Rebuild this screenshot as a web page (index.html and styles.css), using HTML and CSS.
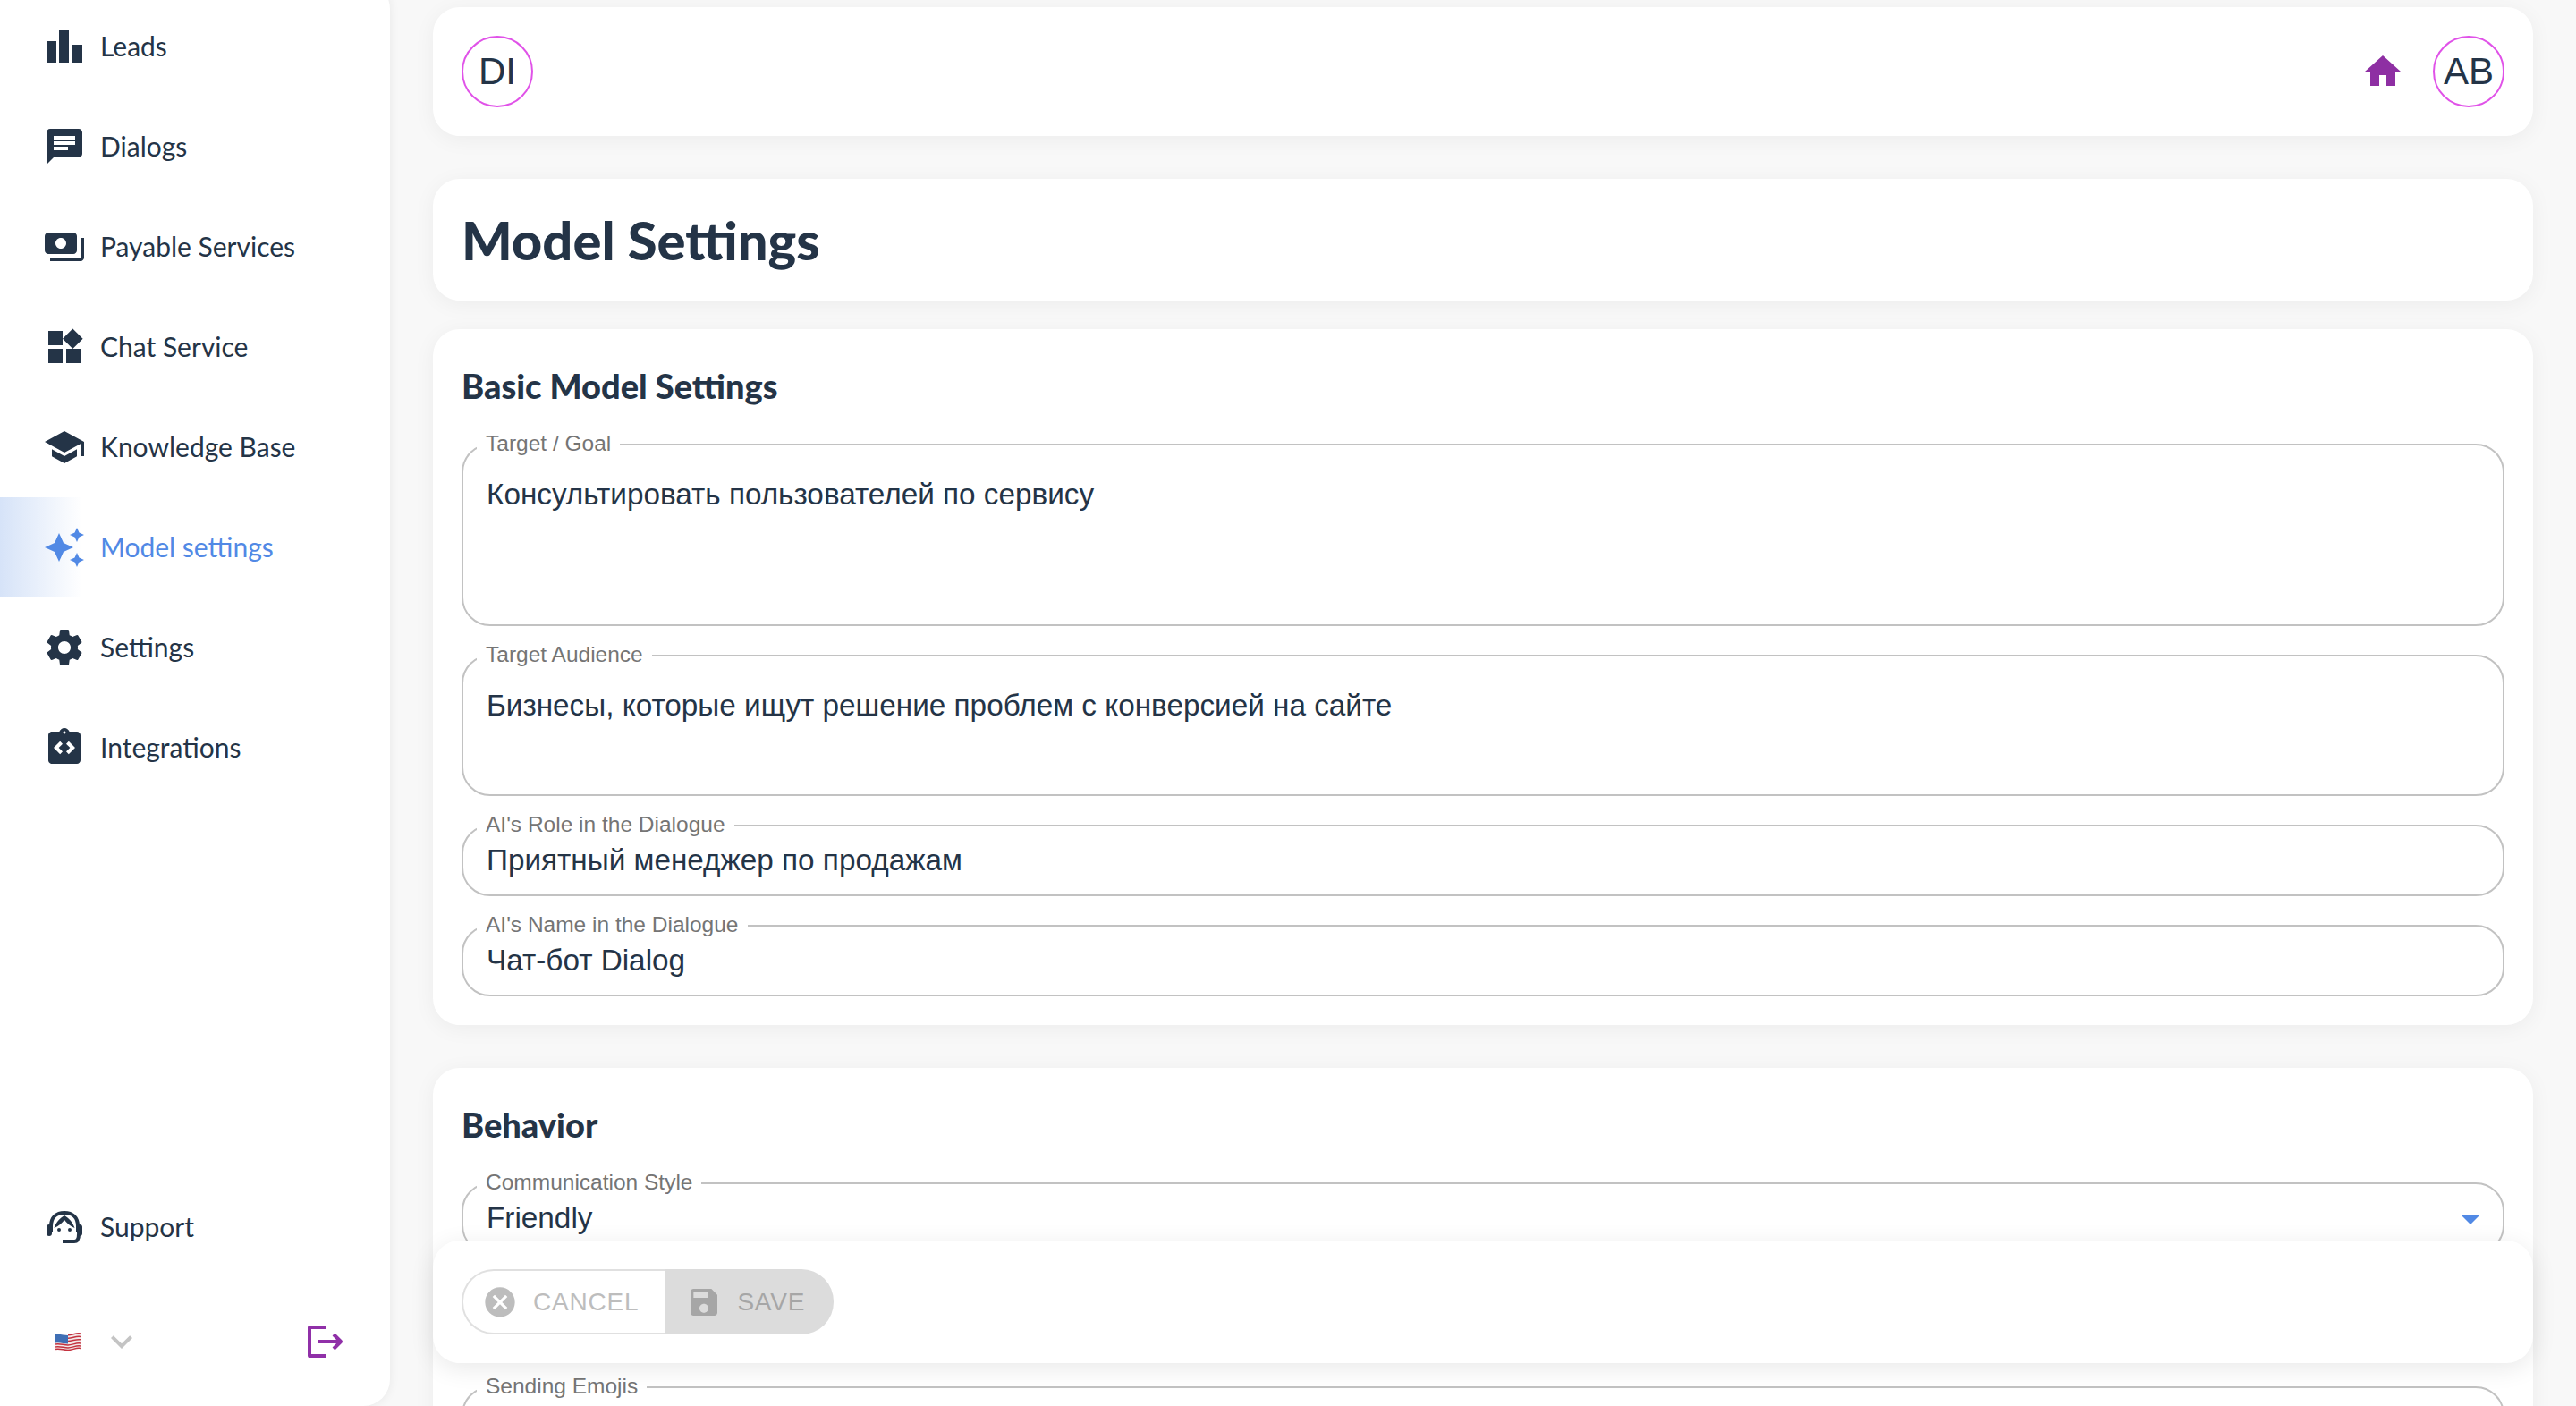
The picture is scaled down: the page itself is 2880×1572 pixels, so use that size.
FILE: index.html
```html
<!DOCTYPE html>
<html lang="en">
<head>
<meta charset="utf-8">
<title>Model Settings</title>
<link rel="stylesheet" href="styles.css">
</head>
<body>
<div class="app">
  <aside class="sidebar">
    <nav class="nav">
      <a class="nav-item"><svg class="icon" viewBox="0 0 48 48"><path d="M4 18h11v24H4zM18 6h11v36H18zM33 22h11v20H33z"/></svg><span>Leads</span></a>
      <a class="nav-item"><svg class="icon" viewBox="0 0 24 24"><path d="M20 2H4c-1.1 0-1.99.9-1.99 2L2 22l4-4h14c1.1 0 2-.9 2-2V4c0-1.1-.9-2-2-2zM6 9h12v2H6V9zm8 5H6v-2h8v2zm4-6H6V6h12v2z"/></svg><span>Dialogs</span></a>
      <a class="nav-item"><svg class="icon" viewBox="0 0 24 24"><path d="M19 14V6c0-1.1-.9-2-2-2H3c-1.1 0-2 .9-2 2v8c0 1.1.9 2 2 2h14c1.1 0 2-.9 2-2zm-9-1c-1.66 0-3-1.34-3-3s1.34-3 3-3 3 1.34 3 3-1.34 3-3 3zm13-6v11c0 1.1-.9 2-2 2H4v-2h17V7h2z"/></svg><span>Payable Services</span></a>
      <a class="nav-item"><svg class="icon" viewBox="0 0 24 24"><path d="M13 13v8h8v-8h-8zM3 21h8v-8H3v8zM3 3v8h8V3H3zm13.66-1.31L11 7.34 16.66 13l5.66-5.66-5.66-5.65z"/></svg><span>Chat Service</span></a>
      <a class="nav-item"><svg class="icon" viewBox="0 0 24 24"><path d="M5 13.18v4L12 21l7-3.82v-4L12 17l-7-3.82zM12 3 1 9l11 6 9-4.91V17h2V9L12 3z"/></svg><span>Knowledge Base</span></a>
      <a class="nav-item nav-item-active"><svg class="icon" viewBox="0 0 24 24"><path d="m19 9 1.25-2.75L23 5l-2.75-1.25L19 1l-1.25 2.75L15 5l2.75 1.25L19 9zm-7.5.5L9 4 6.5 9.5 1 12l5.5 2.5L9 20l2.5-5.5L17 12l-5.5-2.5zM19 15l-1.25 2.75L15 19l2.75 1.25L19 23l1.25-2.75L23 19l-2.75-1.25L19 15z"/></svg><span>Model settings</span></a>
      <a class="nav-item"><svg class="icon" viewBox="0 0 24 24"><path d="M19.43 12.98c.04-.32.07-.64.07-.98s-.03-.66-.07-.98l2.11-1.65c.19-.15.24-.42.12-.64l-2-3.46c-.12-.22-.39-.3-.61-.22l-2.49 1c-.52-.4-1.08-.73-1.69-.98l-.38-2.65C14.46 2.18 14.25 2 14 2h-4c-.25 0-.46.18-.49.42l-.38 2.65c-.61.25-1.17.59-1.69.98l-2.49-1c-.23-.09-.49 0-.61.22l-2 3.46c-.13.22-.07.49.12.64l2.11 1.65c-.04.32-.07.65-.07.98s.03.66.07.98l-2.11 1.65c-.19.15-.24.42-.12.64l2 3.46c.12.22.39.3.61.22l2.49-1c.52.4 1.08.73 1.69.98l.38 2.65c.03.24.24.42.49.42h4c.25 0 .46-.18.49-.42l.38-2.65c.61-.25 1.17-.59 1.69-.98l2.49 1c.23.09.49 0 .61-.22l2-3.46c.12-.22.07-.49-.12-.64l-2.11-1.65zM12 15.5c-1.93 0-3.5-1.57-3.5-3.5s1.57-3.5 3.5-3.5 3.5 1.57 3.5 3.5-1.57 3.5-3.5 3.5z"/></svg><span>Settings</span></a>
      <a class="nav-item"><svg class="icon" viewBox="0 0 24 24"><path d="M19 3h-4.18C14.4 1.84 13.3 1 12 1c-1.3 0-2.4.84-2.82 2H5c-.14 0-.27.01-.4.04-.39.08-.74.28-1.01.55-.18.18-.33.4-.43.64-.1.23-.16.49-.16.77v14c0 .27.06.54.16.78s.25.45.43.64c.27.27.62.47 1.01.55.13.02.26.03.4.03h14c1.1 0 2-.9 2-2V5c0-1.1-.9-2-2-2zM11 14.17l-1.41 1.42L6 12l3.59-3.59L11 9.83 8.83 12 11 14.17zm1-9.92c-.41 0-.75-.34-.75-.75s.34-.75.75-.75.75.34.75.75-.34.75-.75.75zm2.41 11.34L13 14.17 15.17 12 13 9.83l1.41-1.42L18 12l-3.59 3.59z"/></svg><span>Integrations</span></a>
    </nav>
    <div class="side-bottom">
      <a class="nav-item"><svg class="icon" viewBox="0 0 48 48"><path class="line" d="M9 30v-7C9 13 15 8 24 8s15 5 15 15v7"/><path d="M24 11c-5 3-9 7-11.500 14 5-2 9-6 11.500-9 2.500 3 6.500 7 11.500 9C33 18 29 14 24 11z"/><circle cx="18" cy="27" r="2"/><circle cx="30" cy="27" r="2"/><rect x="4" y="21" width="6" height="13" rx="3"/><rect x="38" y="21" width="6" height="13" rx="3"/><path class="line" d="M40 32c0 6-2 8-5 8H22"/></svg><span>Support</span></a>
      <div class="lang-row">
        <div class="lang">
          <svg class="flag" viewBox="0 0 28 20"><path class="flag-white" d="M0 2c5-1 9 1 14 1s9-3 14-2v17c-5-1-9 2-14 2s-9-2-14-1z"/><g class="flag-red"><path d="M14 2.800c5 0 9-2.800 14-1.800"/><path d="M14 6.200c5 0 9-2.800 14-1.800"/><path d="M14 9.600c5 0 9-2.800 14-1.800"/><path d="M0 13c5-1 9 1 14 1s9-3 14-2"/><path d="M0 16c5-1 9 1 14 1s9-3 14-2"/><path d="M0 18.500c5-1 9 1 14 1s9-3 14-2"/></g><path class="flag-blue" d="M0 2c5-1 9 1 14 1v9.500c-5 0-9-2-14-1z"/></svg>
          <svg class="chevron" viewBox="0 0 24 24"><path d="M16.590 8.590 12 13.170 7.410 8.590 6 10l6 6 6-6z"/></svg>
        </div>
        <svg class="logout" viewBox="0 0 48 48"><path d="M24 8H6v32h18M16 24h24M33 16l8 8-8 8"/></svg>
      </div>
    </div>
  </aside>

  <main class="main">
    <header class="card topbar">
      <div class="avatar">DI</div>
      <svg class="home" viewBox="0 0 24 24"><path d="M10 20v-6h4v6h5v-8h3L12 3 2 12h3v8z"/></svg>
      <div class="avatar">AB</div>
    </header>

    <section class="card title-card"><h1>Model Settings</h1></section>

    <section class="card form-card">
      <h2>Basic Model Settings</h2>
      <div class="fields">
        <div class="field field-goal"><label>Target / Goal</label><div class="value">Консультировать пользователей по сервису</div></div>
        <div class="field field-audience"><label>Target Audience</label><div class="value">Бизнесы, которые ищут решение проблем с конверсией на сайте</div></div>
        <div class="field"><label>AI's Role in the Dialogue</label><div class="value">Приятный менеджер по продажам</div></div>
        <div class="field"><label>AI's Name in the Dialogue</label><div class="value">Чат-бот Dialog</div></div>
      </div>
    </section>

    <section class="card form-card behavior-card">
      <h2>Behavior</h2>
      <div class="fields">
        <div class="field"><label>Communication Style</label><div class="value">Friendly</div><span class="caret"></span></div>
        <div class="field field-emojis"><label>Sending Emojis</label></div>
      </div>
    </section>

    <div class="card actions">
      <div class="btn-group">
        <button class="btn btn-cancel"><svg viewBox="0 0 24 24"><path d="M12 2C6.470 2 2 6.470 2 12s4.470 10 10 10 10-4.470 10-10S17.530 2 12 2zm5 13.590L15.590 17 12 13.410 8.410 17 7 15.590 10.590 12 7 8.410 8.410 7 12 10.590 15.590 7 17 8.410 13.410 12 17 15.590z"/></svg>CANCEL</button>
        <button class="btn btn-save"><svg viewBox="0 0 24 24"><path d="M17 3H5c-1.110 0-2 .9-2 2v14c0 1.100.89 2 2 2h14c1.100 0 2-.9 2-2V7l-4-4zm-5 16c-1.660 0-3-1.340-3-3s1.340-3 3-3 3 1.340 3 3-1.340 3-3 3zm3-10H5V5h10v4z"/></svg>SAVE</button>
      </div>
    </div>
  </main>
</div>
</body>
</html>
```
FILE: styles.css
```css
* { box-sizing: border-box; }
html, body { margin: 0; height: 1572px; overflow: hidden; }
body { background: #f8f8f8; color: #243447; font-family: "Liberation Sans", Arial, sans-serif; }
.app { display: flex; height: 1572px; }

.sidebar {
  width: 436px; flex: none; height: 1592px; margin-top: -20px; padding-top: 16px;
  background: #fff; border-radius: 0 30px 30px 0;
  box-shadow: 0 0 12px rgba(0,0,0,.07);
  display: flex; flex-direction: column; justify-content: space-between;
  font-family: Lato, "Noto Sans", sans-serif; position: relative; z-index: 2;
}
.nav { display: flex; flex-direction: column; }
.nav-item { height: 112px; padding-left: 48px; display: flex; align-items: center; gap: 16px; font-size: 30px; color: #243447; }
.nav-item span { padding-bottom: 2px; }
.icon { width: 48px; height: 48px; flex: none; fill: #243447; }
.icon .line { fill: none; stroke: #243447; stroke-width: 4; stroke-linecap: butt; }
.nav-item-active { color: #5189e5; background: linear-gradient(90deg, #d6e3f8, #fff 92px); }
.nav-item-active .icon { fill: #5189e5; }

.side-bottom { display: flex; flex-direction: column; padding-bottom: 48px; }
.lang-row { display: flex; align-items: center; justify-content: space-between; height: 48px; margin-top: 48px; padding: 0 48px 0 62px; }
.lang { display: flex; align-items: center; gap: 22px; }
.flag { width: 28px; height: 20px; display: block; }
.flag-white { fill: #f3e9e9; }
.flag-red { fill: none; stroke: #c4323f; stroke-width: 1.500; }
.flag-blue { fill: #3f6fb5; }
.chevron { width: 48px; height: 48px; fill: #c4c4c4; }
.logout { width: 48px; height: 48px; fill: none; stroke: #9030a8; stroke-width: 4; stroke-linejoin: round; }

.main { flex: 1; min-width: 0; height: 1572px; padding: 8px 48px 0; position: relative; overflow: hidden; }
.card { background: #fff; border-radius: 30px; box-shadow: 0 4px 24px rgba(0,0,0,.05); }
.topbar { height: 144px; padding: 0 32px; display: flex; align-items: center; gap: 32px; }
.avatar { width: 80px; height: 80px; border: 2px solid #e052e8; border-radius: 50%; display: flex; align-items: center; justify-content: center; font-size: 42px; color: #243447; }
.topbar .avatar:first-child { margin-right: auto; }
.home { width: 48px; height: 48px; fill: #8e2fa3; }

.title-card { height: 136px; margin-top: 48px; padding: 0 32px; display: flex; align-items: center; }
h1 { margin: 0; font-family: Lato, "Noto Sans", sans-serif; font-weight: 900; font-size: 59.7px; line-height: 72px; color: #243447; }
h2 { margin: 0; height: 96px; font-family: Lato, "Noto Sans", sans-serif; font-weight: 900; font-size: 38px; line-height: 62px; color: #243447; }

.form-card { margin-top: 32px; padding: 32px 32px 32px; }
.behavior-card { margin-top: 48px; height: 600px; }
.fields { display: flex; flex-direction: column; gap: 32px; }
.field { position: relative; height: 80px; border: 2px solid #c2c2c2; border-radius: 32px; padding: 0 25px 0 26px; display: flex; align-items: center; }
.field-goal { height: 204px; align-items: flex-start; padding-top: 36px; }
.field-audience { height: 158px; align-items: flex-start; padding-top: 36px; }
.field-emojis { margin-top: 116px; }
.field label { position: absolute; left: 15px; top: -16px; padding: 0 10px; background: #fff; font-size: 24.5px; line-height: 28px; color: #757575; }
.value { font-size: 33.3px; line-height: 38px; color: #243447; }
.caret { margin-left: auto; margin-right: 1px; width: 0; height: 0; border-left: 10px solid transparent; border-right: 10px solid transparent; border-top: 10px solid #5189e5; position: relative; top: 2px; }

.actions { position: absolute; left: 48px; right: 48px; bottom: 48px; height: 137px; padding: 32px; box-shadow: 0 6px 28px rgba(0,0,0,.09); }
.btn-group { display: flex; height: 73px; }
.btn { display: flex; align-items: center; gap: 17px; height: 73px; font-family: "Liberation Sans", Arial, sans-serif; font-size: 28px; letter-spacing: .8px; }
.btn svg { width: 40px; height: 40px; flex: none; }
.btn-cancel { padding: 0 30px 0 21px; background: #fff; color: #bdbdbd; border: 2px solid #e0e0e0; border-right: 0; border-radius: 36px 0 0 36px; }
.btn-cancel svg { fill: #bdbdbd; }
.btn-save { padding: 0 32px 0 23px; background: #dcdcdc; color: #a6a6a6; border: 0; border-radius: 0 36px 36px 0; }
.btn-save svg { fill: #a6a6a6; }
```
